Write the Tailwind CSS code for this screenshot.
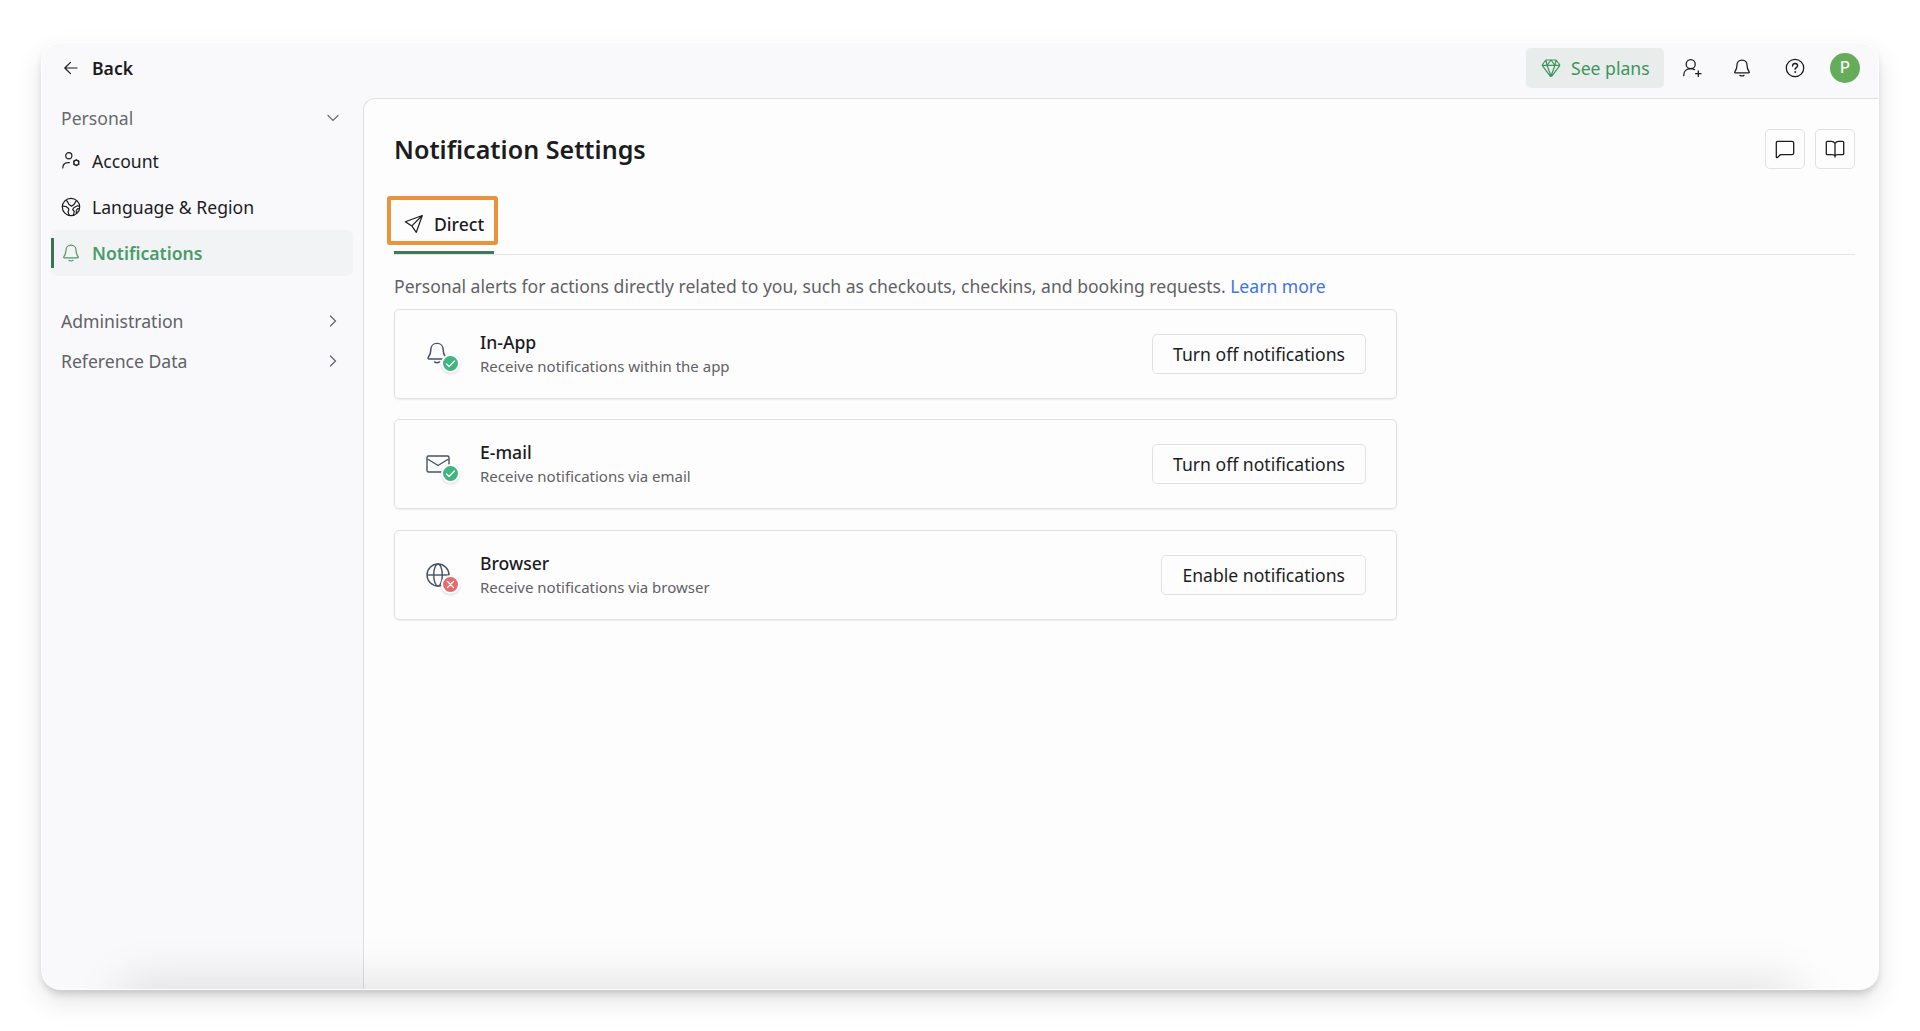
<!DOCTYPE html>
<html lang="en">
<head>
  <meta charset="UTF-8" />
  <meta name="viewport" content="width=device-width, initial-scale=1.0" />
  <title>Notification Settings</title>
  <script src="https://cdn.jsdelivr.net/npm/@tailwindcss/browser@4"></script>
</head>
<body class="bg-white h-screen overflow-hidden pt-[42px] pl-[41px] pr-[41px] font-['Noto_Sans',sans-serif] text-[17.6px] leading-6 text-[#1b1c1f]">

  <!-- Icons -->
  <svg class="hidden">
    <symbol id="bell" viewBox="0 0 24 24"><path d="M9.3 21.8c.8.5 1.7.8 2.7.8s1.900-.3 2.700-.8M12 1.500c-4 0-6.700 2.900-6.700 6.700 0 4.300-1.300 6.600-2.700 8.500-.8 1.100-.4 1.800.8 1.800h17.200c1.200 0 1.600-.7.8-1.800-1.400-1.900-2.700-4.200-2.700-8.500 0-3.800-2.700-6.700-6.700-6.700z" /></symbol>
    <symbol id="chevron" viewBox="0 0 12 12"><path d="M1 3.500l5 5 5-5" /></symbol>
  </svg>

  <div class="relative w-[1838px] h-[948px] rounded-[20px] border border-white bg-[#f9f9fb] overflow-hidden flex flex-col">

    <!-- Header -->
    <header class="h-[55px] shrink-0 flex items-center justify-between pl-[20px] pr-[18px] pb-[5px]">
      <a class="flex items-center font-semibold">
        <svg class="w-[18px] h-[18px] mr-[12px]" viewBox="0 0 18 18" fill="none" stroke="currentColor" stroke-width="1.200" stroke-linecap="round" stroke-linejoin="round"><path d="M15 9H3M8.500 3.300L2.800 9l5.700 5.700" /></svg>
        Back
      </a>
      <div class="flex items-center">
        <button class="h-10 w-[138px] rounded-[5px] bg-[#e8eceb] text-[#3f9460] flex items-center pl-[15px]">
          <svg class="w-5 h-5 mr-[10px]" viewBox="0 0 20 20" fill="none" stroke="currentColor" stroke-width="1.200" stroke-linejoin="round"><path d="M5 2h10l3.500 4.500c.3.500.3.900 0 1.400L11.200 17.600c-.7.900-1.700.9-2.400 0L1.500 7.900c-.3-.5-.3-.9 0-1.400zM1.400 7.300h17.200M6 7.300L10 18l4-10.700M5 2l1 5.300L10 2l4 5.300L15 2" /></svg>
          See plans
        </button>
        <svg class="w-5 h-5 ml-[18px]" viewBox="0 0 20 20" fill="none" stroke="currentColor" stroke-width="1.300" stroke-linecap="round"><circle cx="8.700" cy="6.200" r="4.500" /><path d="M1.700 17.500c0-4.200 2.800-6.800 7-6.800 1.500 0 2.700.3 3.800.9M16.300 13v5.400M13.600 15.700H19" /></svg>
        <svg class="w-[18px] h-[18px] ml-[31px]" fill="none" stroke="currentColor" stroke-width="1.700" stroke-linecap="round" stroke-linejoin="round"><use href="#bell" /></svg>
        <svg class="w-5 h-5 ml-[34px]" viewBox="0 0 20 20" fill="none" stroke="currentColor" stroke-width="1.300" stroke-linecap="round"><circle cx="10" cy="10" r="8.700" /><path d="M7.600 8c0-1.500 1-2.500 2.500-2.500s2.500 1 2.500 2.300c0 1.700-2.500 1.900-2.500 3.500" /><circle cx="10.100" cy="14" r=".5" fill="currentColor" stroke-width=".8" /></svg>
        <span class="w-[30px] h-[30px] ml-[25px] rounded-full bg-[#66ad5b] text-white font-['Inter',sans-serif] text-[15.5px] font-medium flex items-center justify-center pb-px">P</span>
      </div>
    </header>

    <div class="flex-1 flex">

      <!-- Sidebar -->
      <aside class="w-[321px] shrink-0 pl-[9px] pr-[10px] pt-[8px]">
        <div class="h-6 flex items-center justify-between pl-[10px] pr-[14px] text-[#67696e]">
          Personal
          <svg class="w-3 h-3" fill="none" stroke="currentColor" stroke-width="1.200" stroke-linecap="round"><use href="#chevron" /></svg>
        </div>
        <nav class="mt-[8px]">
          <a class="h-[46px] flex items-center pl-[11px]">
            <svg class="w-[18px] h-[18px] mr-[12px]" viewBox="0 0 18 18" fill="none" stroke="currentColor" stroke-width="1.200" stroke-linecap="round"><circle cx="6.800" cy="3.800" r="3.100" /><path d="M.8 16c0-3.400 2-5.400 5.200-5.400h1.300" /><circle cx="14.300" cy="10.700" r="2.500" stroke-width="1.300" /><path d="M14.300 7.700v.5M14.300 13.200v.5M11.700 9.200l.4.200M16.500 12l.4.200M16.900 9.200l-.4.200M12.100 12l-.4.200" /></svg>
            Account
          </a>
          <a class="h-[46px] flex items-center pl-[10px]">
            <svg class="w-5 h-5 mr-[11px]" viewBox="0 0 20 20" fill="none" stroke="currentColor" stroke-width="1.200" stroke-linejoin="round"><circle cx="10" cy="10" r="8.700" /><path d="M1.500 9.200l3.500.3 2.500 2c.5.500.4 1 .2 1.800l-.7 1.500 1.300 3.800M4.500 3.200l1.800 1L8 7.500l2.500 1.700 2.800-2 .7-1.500 1.500-2M18.700 9.500l-2-.8-3.700 1.800-1.300 2 1.500 1.800-.7 4.200M15.500 16.500l-.3-3 1.500-2 1.800.3" /></svg>
            Language &amp; Region
          </a>
          <a class="h-[46px] flex items-center rounded-[6px] bg-[#f1f3f4] font-semibold text-[#4a9b6b]">
            <span class="w-[3px] h-[30px] bg-[#3b7355]"></span>
            <svg class="w-[18px] h-[18px] ml-[8px] mr-[12px]" fill="none" stroke="currentColor" stroke-width="1.600" stroke-linecap="round" stroke-linejoin="round"><use href="#bell" /></svg>
            Notifications
          </a>
        </nav>
        <div class="mt-[25px] h-10 flex items-center justify-between pl-[10px] pr-[14px] text-[#5f6166]">
          Administration
          <svg class="w-3 h-3 -rotate-90" fill="none" stroke="currentColor" stroke-width="1.200" stroke-linecap="round"><use href="#chevron" /></svg>
        </div>
        <div class="h-10 flex items-center justify-between pl-[10px] pr-[14px] text-[#5f6166]">
          Reference Data
          <svg class="w-3 h-3 -rotate-90" fill="none" stroke="currentColor" stroke-width="1.200" stroke-linecap="round"><use href="#chevron" /></svg>
        </div>
      </aside>

      <!-- Main -->
      <main class="flex-1 bg-[#fdfdfd] border-t border-l border-[#dfe0e3] rounded-tl-[12px] pl-[30px] pr-[23px] pt-[30px]">
        <div class="h-10 flex items-center justify-between">
          <h1 class="text-[25.1px] font-semibold pb-px">Notification Settings</h1>
          <div class="flex gap-[10px]">
            <button class="w-10 h-10 border border-[#e0e1e4] rounded-[5px] flex items-center justify-center">
              <svg class="w-5 h-5" viewBox="0 0 20 20" fill="none" stroke="currentColor" stroke-width="1.300" stroke-linejoin="round"><path d="M1.300 18V4c0-1 .6-1.700 1.700-1.700h14c1 0 1.700.7 1.700 1.700v10c0 1-.7 1.700-1.700 1.700H5.300L3 18c-.7.600-1.700.8-1.700 0z" /></svg>
            </button>
            <button class="w-10 h-10 border border-[#e0e1e4] rounded-[5px] flex items-center justify-center">
              <svg class="w-5 h-5" viewBox="0 0 20 20" fill="none" stroke="currentColor" stroke-width="1.300" stroke-linejoin="round" stroke-linecap="round"><path d="M10 4.500c-.8-1.400-1.800-2.100-3.500-2.100H2.300c-.6 0-1 .4-1 1v11.300c0 .6.4 1 1 1h5c1.500 0 2.300.4 2.700 1.300.4-.9 1.200-1.300 2.700-1.300h5c.6 0 1-.4 1-1V3.400c0-.6-.4-1-1-1h-4.200c-1.700 0-2.700.7-3.500 2.100zM10 4.500V18" /></svg>
            </button>
          </div>
        </div>

        <!-- Tabs -->
        <div class="mt-[27px] h-[59px] border-b border-[#e3e4e6] flex items-start">
          <div class="relative w-[100px] h-[58px] border-b-[3px] border-[#42775b] flex items-center pl-[10px] pt-px font-medium">
            <svg class="w-5 h-5 mr-[10px] shrink-0" viewBox="0 0 20 20" fill="none" stroke="currentColor" stroke-width="1.200" stroke-linejoin="round"><path d="M18.300 1.500L1.300 7.700l6.500 4.200 4.500 6.400zM18.300 1.500L7.800 11.900" /></svg>
            Direct
            <span class="absolute -left-[7px] top-0 w-[111px] h-[49px] border-4 border-[#e9933b] rounded-[3px]"></span>
          </div>
        </div>

        <p class="mt-[19px] text-[17.57px] text-[#5f6166]">Personal alerts for actions directly related to you, such as checkouts, checkins, and booking requests. <a class="text-[#3f73e8]">Learn more</a></p>

        <div class="mt-[11px] w-[1003px] flex flex-col gap-[20.4px]">
          <div class="h-[90px] border border-[#e0e1e4] rounded-[5px] shadow-[0_1px_2px_rgba(0,0,0,0.07)] flex items-center justify-between pl-[31px] pr-[30px]">
            <div class="flex items-center">
              <div class="relative w-6 h-6 mr-[30px]">
                <svg class="w-[22px] h-[22px]" fill="none" stroke="#475069" stroke-width="1.600" stroke-linecap="round" stroke-linejoin="round"><use href="#bell" /></svg>
                <span class="absolute left-[15px] top-[12px] w-[19px] h-[19px] rounded-full bg-[#3fb57f] border-2 border-white shadow-[0_1px_3px_rgba(0,0,0,0.15)] flex">
                  <svg viewBox="0 0 15 15" fill="none" stroke="white" stroke-width="1.300" stroke-linecap="round" stroke-linejoin="round"><path d="M3.500 8l2.500 2.500L11.500 5" /></svg>
                </span>
              </div>
              <div class="pt-px">
                <div class="font-medium leading-6">In-App</div>
                <div class="text-[15px] leading-[25px] text-[#5f6166]">Receive notifications within the app</div>
              </div>
            </div>
            <button class="h-10 px-[20px] border border-[#e0e1e4] rounded-[5px]">Turn off notifications</button>
          </div>

          <div class="h-[90px] border border-[#e0e1e4] rounded-[5px] shadow-[0_1px_2px_rgba(0,0,0,0.07)] flex items-center justify-between pl-[31px] pr-[30px]">
            <div class="flex items-center">
              <div class="relative w-6 h-6 mr-[30px]">
                <svg class="w-6 h-6" viewBox="0 0 24 24" fill="none" stroke="#475069" stroke-width="1.400" stroke-linejoin="round"><rect x="1" y="4" width="22" height="16" rx="1.500" /><path d="M1.500 7l10.500 6.500 10.500-6.500" /></svg>
                <span class="absolute left-[15px] top-[12px] w-[19px] h-[19px] rounded-full bg-[#3fb57f] border-2 border-white shadow-[0_1px_3px_rgba(0,0,0,0.15)] flex">
                  <svg viewBox="0 0 15 15" fill="none" stroke="white" stroke-width="1.300" stroke-linecap="round" stroke-linejoin="round"><path d="M3.500 8l2.500 2.500L11.500 5" /></svg>
                </span>
              </div>
              <div class="pt-px">
                <div class="font-medium leading-6">E-mail</div>
                <div class="text-[15px] leading-[25px] text-[#5f6166]">Receive notifications via email</div>
              </div>
            </div>
            <button class="h-10 px-[20px] border border-[#e0e1e4] rounded-[5px]">Turn off notifications</button>
          </div>

          <div class="h-[90px] border border-[#e0e1e4] rounded-[5px] shadow-[0_1px_2px_rgba(0,0,0,0.07)] flex items-center justify-between pl-[31px] pr-[30px]">
            <div class="flex items-center">
              <div class="relative w-6 h-6 mr-[30px]">
                <svg class="w-6 h-6" viewBox="0 0 24 24" fill="none" stroke="#475069" stroke-width="1.400"><circle cx="12" cy="12" r="11" /><ellipse cx="12" cy="12" rx="4.300" ry="11" /><path d="M1 12h22" /></svg>
                <span class="absolute left-[15px] top-[12px] w-[19px] h-[19px] rounded-full bg-[#e8696b] border-2 border-white shadow-[0_1px_3px_rgba(0,0,0,0.15)] flex">
                  <svg viewBox="0 0 15 15" fill="none" stroke="white" stroke-width="1.200" stroke-linecap="round"><path d="M4.500 4.500l6 6M10.500 4.500l-6 6" /></svg>
                </span>
              </div>
              <div class="pt-px">
                <div class="font-medium leading-6">Browser</div>
                <div class="text-[15px] leading-[25px] text-[#5f6166]">Receive notifications via browser</div>
              </div>
            </div>
            <button class="h-10 px-[20px] border border-[#e0e1e4] rounded-[5px]">Enable notifications</button>
          </div>
        </div>
      </main>
    </div>

    <!-- Bottom fade -->
    <div class="absolute left-[85px] right-[85px] -bottom-[40px] h-10 shadow-[0_0_50px_4px_rgba(0,0,0,0.13)]"></div>
  </div>

  <!-- Window shadow -->
  <div class="absolute left-[41px] top-[42px] w-[1838px] h-[948px] rounded-[20px] pointer-events-none shadow-[0_5px_8px_-2px_rgba(0,0,0,0.18),0_12px_28px_rgba(0,0,0,0.1)]"></div>
</body>
</html>
